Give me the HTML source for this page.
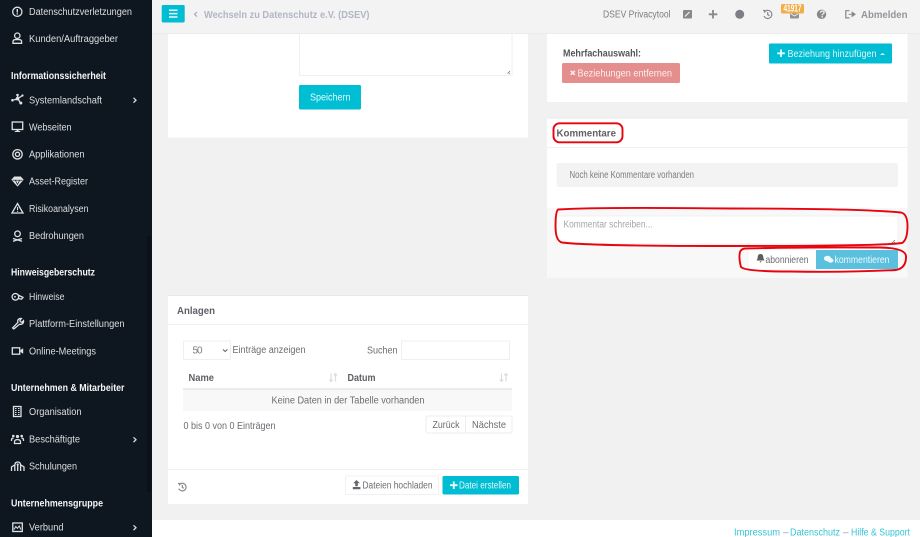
<!DOCTYPE html>
<html lang="de">
<head>
<meta charset="utf-8">
<title>DSEV Privacytool</title>
<style>
html,body{margin:0;padding:0;width:920px;height:537px;overflow:hidden;background:#f1f1f1}
svg{display:block;filter:blur(.35px)}
text{font-family:"Liberation Sans",sans-serif;font-size:10px}
.s{fill:#dcdfe1}
.h{fill:#f4f5f6;font-weight:bold}
.g{fill:#6a6d72}
.b{fill:#5d6066;font-weight:bold}
.ic{fill:none;stroke:#dfe1e3;stroke-width:1.3}
.icf{fill:#dfe1e3}
.t{fill:none;stroke:#85888c;stroke-width:1.2}
.tf{fill:#85888c}
.red{fill:none;stroke:#e8040f;stroke-width:1.9}
</style>
</head>
<body>
<svg width="920" height="537" viewBox="0 0 920 537" xmlns="http://www.w3.org/2000/svg">
<rect width="920" height="537" fill="#f1f1f1"/>
<!-- header -->
<rect x="152" width="768" height="33" fill="#f3f3f3"/>
<rect x="152" y="33" width="768" height="1" fill="#ececec"/>
<!-- footer -->
<rect x="152" y="520" width="768" height="17" fill="#fff"/>
<text x="734" y="535.5" fill="#35c5d8" textLength="46" lengthAdjust="spacingAndGlyphs">Impressum</text>
<text x="783" y="535.5" fill="#8fa0a8" font-size="9">–</text>
<text x="790" y="535.5" fill="#35c5d8" textLength="50" lengthAdjust="spacingAndGlyphs">Datenschutz</text>
<text x="843" y="535.5" fill="#8fa0a8">–</text>
<text x="851" y="535.5" fill="#35c5d8" textLength="59" lengthAdjust="spacingAndGlyphs">Hilfe &amp; Support</text>

<!-- sidebar -->
<rect width="152" height="537" fill="#0e171f"/>
<rect x="147" y="236" width="4" height="256" fill="#0a1117"/>
<text class="s" x="29" y="15" textLength="103" lengthAdjust="spacingAndGlyphs">Datenschutzverletzungen</text>
<text class="s" x="29" y="42" textLength="89" lengthAdjust="spacingAndGlyphs">Kunden/Auftraggeber</text>
<text class="s" x="29" y="103.5" textLength="73" lengthAdjust="spacingAndGlyphs">Systemlandschaft</text>
<text class="s" x="29" y="130.5" textLength="42.5" lengthAdjust="spacingAndGlyphs">Webseiten</text>
<text class="s" x="29" y="157.5" textLength="55.5" lengthAdjust="spacingAndGlyphs">Applikationen</text>
<text class="s" x="29" y="184.5" textLength="59" lengthAdjust="spacingAndGlyphs">Asset-Register</text>
<text class="s" x="29" y="212" textLength="59.5" lengthAdjust="spacingAndGlyphs">Risikoanalysen</text>
<text class="s" x="29" y="239" textLength="55" lengthAdjust="spacingAndGlyphs">Bedrohungen</text>
<text class="s" x="29" y="300" textLength="35.5" lengthAdjust="spacingAndGlyphs">Hinweise</text>
<text class="s" x="29" y="327" textLength="95.5" lengthAdjust="spacingAndGlyphs">Plattform-Einstellungen</text>
<text class="s" x="29" y="354.5" textLength="67" lengthAdjust="spacingAndGlyphs">Online-Meetings</text>
<text class="s" x="29" y="415" textLength="52.5" lengthAdjust="spacingAndGlyphs">Organisation</text>
<text class="s" x="29" y="442.5" textLength="51" lengthAdjust="spacingAndGlyphs">Beschäftigte</text>
<text class="s" x="29" y="469.5" textLength="48" lengthAdjust="spacingAndGlyphs">Schulungen</text>
<text class="s" x="29" y="530.5" textLength="34.5" lengthAdjust="spacingAndGlyphs">Verbund</text>
<text class="h" x="11" y="79" textLength="95" lengthAdjust="spacingAndGlyphs">Informationssicherheit</text>
<text class="h" x="11" y="275.5" textLength="84" lengthAdjust="spacingAndGlyphs">Hinweisgeberschutz</text>
<text class="h" x="11" y="391" textLength="113.5" lengthAdjust="spacingAndGlyphs">Unternehmen &amp; Mitarbeiter</text>
<text class="h" x="11" y="506.5" textLength="92" lengthAdjust="spacingAndGlyphs">Unternehmensgruppe</text>
<!-- sidebar chevrons -->
<g fill="none" stroke="#d8dadc" stroke-width="1.3">
<path d="M133.5 97.8l2.5 2.4-2.5 2.4"/>
<path d="M133.5 437.3l2.5 2.4-2.5 2.4"/>
<path d="M133.5 525.3l2.5 2.4-2.5 2.4"/>
</g>
<!-- sidebar icons -->
<circle class="ic" cx="17.3" cy="11.8" r="4.6"/>
<path class="icf" d="M16.6 9h1.4v3.5h-1.400zM16.6 13.200h1.400v1.300h-1.400z"/>
<circle class="ic" cx="17.3" cy="35.7" r="2.7"/>
<path class="ic" d="M13 43.300v-1.700q0-2 2.500-2h3.600q2.500 0 2.500 2v1.700z"/>
<!-- Systemlandschaft -->
<path class="ic" d="M14 100l4-1.500-.5-3M18 98.500l2 4M18 98.500l4.500-3" stroke-width="1"/>
<circle class="icf" cx="12.500" cy="100.200" r="1.300"/><circle class="icf" cx="17.500" cy="98.700" r="1.800"/><circle class="icf" cx="17.500" cy="95" r="1.300"/><circle class="icf" cx="22.500" cy="95.500" r="1.100"/><circle class="icf" cx="20.800" cy="103" r="1.500"/>
<!-- Webseiten -->
<rect class="ic" x="12.200" y="122" width="10.500" height="7.500"/>
<path class="icf" d="M16.500 129.500h2v1.500h1.700v1h-5.400v-1h1.700z"/>
<!-- Applikationen -->
<circle class="ic" cx="17.500" cy="154.300" r="4.700"/><circle class="ic" cx="17.500" cy="154.300" r="2.100"/>
<!-- Asset -->
<path class="icf" d="M14.200 176.500h6.600l2.900 3.300-6.200 6.800-6.200-6.800z"/>
<path d="M12.500 180.200h10M15.500 180.500l2 4 2-4" fill="none" stroke="#0e171f" stroke-width=".7"/>
<!-- Risiko -->
<path d="M17.500 203.500l5.500 9.500H12z" fill="none" stroke="#dfe1e3" stroke-width="1.300"/>
<path class="icf" d="M17 207h1.100v3H17zM17 210.800h1.100v1H17z"/>
<!-- Bedrohungen -->
<circle class="ic" cx="17.500" cy="233.800" r="2.800"/>
<path class="ic" d="M13 238.500l9 2.800M22 238.500l-9 2.800"/>
<!-- Hinweise -->
<circle class="ic" cx="15.400" cy="296.800" r="3.300"/>
<path class="ic" d="M18 295l5 2.400-1.400 1.800-3.800-.8"/>
<circle class="icf" cx="15" cy="296.800" r=".9"/>
<!-- Plattform -->
<path class="ic" d="M13.500 328.800l-.9-.9 5.300-5.500q-.7-2.500 1-3.500 1.200-.7 2.500-.4l-1.500 1.700.5 1.500 1.500.5 1.600-1.500q.3 2-1 3-1.300 1-3 .6l-5.500 4.500z" stroke-width="1"/>
<!-- Online-Meetings -->
<rect class="ic" x="12.300" y="347.800" width="7.400" height="6.400"/>
<path class="icf" d="M20.500 350l2.700-1.800v5.600l-2.700-1.800z"/>
<!-- Organisation -->
<rect class="ic" x="13.500" y="406.500" width="7.500" height="10"/>
<path d="M15 408.500h1.500M18 408.500h1.500M15 410.500h1.500M18 410.500h1.500M15 412.500h1.500M18 412.500h1.500M15 414.500h1.500M18 414.500h1.500" stroke="#dfe1e3" stroke-width="1.100"/>
<!-- Beschaeftigte -->
<circle class="icf" cx="17.500" cy="436.500" r="1.600"/><circle class="icf" cx="13.300" cy="436" r="1.300"/><circle class="icf" cx="21.700" cy="436" r="1.300"/>
<path class="ic" d="M14.500 443.500v-1.600q0-2.300 3-2.300t3 2.300v1.600zM11.500 441v-1.300q0-1.500 2-1.500M23.500 441v-1.300q0-1.500-2-1.500" stroke-width="1"/>
<!-- Schulungen -->
<path class="ic" d="M14.800 471v-5.500q0-3.500 2.900-3.500t2.900 3.500v5.500M11.500 471v-4l3-2M24 471v-4l-3-2M17.700 465.500V471" stroke-width="1.100"/>
<circle class="icf" cx="17.700" cy="464.500" r="1.100"/>
<!-- Verbund -->
<rect class="ic" x="12.800" y="523" width="9.500" height="8.500" stroke-width="1"/>
<path d="M14 529.500l1.800-3 1.700 1.800 1.700-2.300 1.700 3.500" fill="none" stroke="#dfe1e3" stroke-width="1"/>

<!-- header content -->
<rect x="161.700" y="5" width="23" height="17.500" rx="1.500" fill="#00bdd3"/>
<path d="M169 10.200h8.500M169 13.600h8.500M169 17h8.500" stroke="#e9fbfd" stroke-width="1.500"/>
<path d="M197 12l-2.400 2.300 2.400 2.300" fill="none" stroke="#a4a9b5" stroke-width="1.200"/>
<text x="204" y="18" fill="#b1b6c4" font-weight="bold" font-size="10.500" textLength="165.500" lengthAdjust="spacingAndGlyphs">Wechseln zu Datenschutz e.V. (DSEV)</text>
<text x="603" y="17.500" style="fill:#7a7d83" textLength="67.500" lengthAdjust="spacingAndGlyphs">DSEV Privacytool</text>
<rect x="683" y="10" width="9" height="8.500" rx="1" fill="#85888c"/>
<path d="M685 16.500l4.500-4.500" stroke="#f3f3f3" stroke-width="1.200"/>
<path d="M713 10v8.500M708.800 14.300h8.500" stroke="#85888c" stroke-width="1.800"/>
<circle cx="739.700" cy="14.300" r="4.500" fill="#7c7f83"/>
<path class="t" d="M763 10.500h1.500l.3 1.400q1.400-1.900 3-1.600a4.100 4.100 0 1 1-3.800 5.800"/>
<path class="t" d="M767.700 12v2.700l1.700 1"/>
<rect x="790" y="11" width="9" height="7.500" rx="1" fill="#8f9296"/>
<path d="M790.500 13.500l4 2.500 4-2.500" fill="none" stroke="#f3f3f3" stroke-width=".8"/>
<rect x="781" y="4" width="23" height="9.500" rx="1.500" fill="#f2ae4a"/>
<text x="783.500" y="11.600" fill="#fff" font-weight="bold" font-size="7.500" textLength="18" lengthAdjust="spacingAndGlyphs">41917</text>
<circle cx="821.500" cy="14.300" r="4.700" fill="#85888c"/>
<text x="819.300" y="17.300" fill="#f3f3f3" font-weight="bold" font-size="8">?</text>
<path class="t" d="M849.500 10.700h-3.700v7.200h3.700"/>
<path d="M848.500 14.300h3.500v-2.300l3.300 2.300-3.300 2.300v-2.300" fill="#85888c" stroke="#85888c" stroke-width=".8"/>
<text x="861" y="18" fill="#92959a" font-weight="bold" font-size="10.500" textLength="46.500" lengthAdjust="spacingAndGlyphs">Abmelden</text>

<!-- left top card -->
<rect x="168" y="34" width="360" height="103.500" fill="#fff"/>
<path d="M299.500 34v41.500h212.600V34" fill="#fff" stroke="#efefef"/>
<path d="M510 71l-2.500 2.500M510 73l-1 1" stroke="#777" stroke-width=".8"/>
<rect x="299" y="85" width="62" height="24.500" rx="1.500" fill="#00bfd5"/>
<text x="310" y="100.500" fill="#e8fbfd" textLength="40.500" lengthAdjust="spacingAndGlyphs">Speichern</text>

<!-- right top card -->
<rect x="547" y="34" width="360.500" height="68" fill="#fff"/>
<text x="563" y="56.500" class="b" style="fill:#555" textLength="78" lengthAdjust="spacingAndGlyphs">Mehrfachauswahl:</text>
<rect x="769" y="43.500" width="123" height="20" rx="1" fill="#00bdd3"/>
<path d="M781 49.500v7.500M777.300 53.300h7.500" stroke="#e9fbfd" stroke-width="1.800"/>
<text x="787.500" y="56.800" fill="#dff8fb" textLength="89" lengthAdjust="spacingAndGlyphs">Beziehung hinzufügen</text>
<path d="M880 55l2.500-2 2.500 2z" fill="#e9fbfd"/>
<rect x="562" y="63" width="118" height="20" rx="1.500" fill="#e58e8e"/>
<path d="M570.800 70.800l4 4M574.800 70.800l-4 4" stroke="#fdeeee" stroke-width="1.600"/>
<text x="577.500" y="76.500" fill="#fdeeee" textLength="94.500" lengthAdjust="spacingAndGlyphs">Beziehungen entfernen</text>

<!-- Kommentare card -->
<rect x="547" y="117.500" width="360.500" height="160.500" fill="#fff"/>
<rect x="547" y="117.500" width="360.500" height="1" fill="#e9e9e9"/>
<rect x="547" y="147" width="360.500" height="1" fill="#f1f1f1"/>
<text x="556.500" y="136.500" class="b" textLength="59.500" lengthAdjust="spacingAndGlyphs" font-size="10.500">Kommentare</text>
<rect x="556.500" y="163" width="341.500" height="24" rx="2" fill="#f3f3f3"/>
<text x="569.500" y="177.800" fill="#7a7d82" font-size="9" textLength="124.500" lengthAdjust="spacingAndGlyphs">Noch keine Kommentare vorhanden</text>
<rect x="547" y="208" width="360.500" height="70" fill="#f8f8f8"/>
<rect x="556.500" y="216" width="341.500" height="28" fill="#fff" stroke="#f1f1f1"/>
<text x="563.500" y="227.500" fill="#a3a5a9" font-size="9.500" textLength="89" lengthAdjust="spacingAndGlyphs">Kommentar schreiben...</text>
<path d="M895 240l-3.500 3.500M895 242l-1.500 1.500" stroke="#777" stroke-width=".8"/>
<rect x="749" y="250" width="67" height="19" fill="#fff"/>
<rect x="816" y="250" width="82" height="19" fill="#5bc0de"/>
<path d="M760.500 254q-2.700 0-2.800 3.200-.1 1.900-1.200 3.300h8q-1.100-1.400-1.200-3.300-.1-3.200-2.800-3.200zM759.500 261.300h2l-1 1.400z" fill="#5a5d62"/>
<text x="765.500" y="263" fill="#6a6d72" textLength="43" lengthAdjust="spacingAndGlyphs">abonnieren</text>
<ellipse cx="827.500" cy="258.500" rx="3.600" ry="2.700" fill="#eef9fc"/><ellipse cx="830.500" cy="260.500" rx="3" ry="2.200" fill="#eef9fc"/>
<text x="834.500" y="263" fill="#eef9fc" textLength="55" lengthAdjust="spacingAndGlyphs">kommentieren</text>
<!-- red annotations -->
<rect class="red" x="553.500" y="123.300" width="69" height="19" rx="6"/>
<path class="red" d="M558 209.500Q600 207 730 208.500 860 208.500 901 212.500 907.500 214 907.500 226 907.500 240 902 243 880 246 730 246 590 246 562 242.500 555.500 241 555.500 226 555.500 212 558 209.500z"/>
<path class="red" d="M745 248.500Q800 247 880 247.500 905 248 906 256 906.500 268 896 270 850 272.500 790 271.500 745 271.500 741 267 738.500 258 740 252 741 249 745 248.500z"/>

<!-- Anlagen card -->
<rect x="168" y="295" width="360" height="209" fill="#fff"/>
<rect x="168" y="295" width="360" height="1" fill="#e9e9e9"/>
<rect x="168" y="324" width="360" height="1" fill="#f1f1f1"/>
<text x="177" y="314" class="b" font-size="10.500" textLength="38" lengthAdjust="spacingAndGlyphs">Anlagen</text>
<rect x="183.500" y="341" width="47" height="18.500" rx="1" fill="#fff" stroke="#efefef"/>
<text x="192.500" y="353.500" fill="#7a7d82" textLength="10">50</text>
<path d="M223 349.500l2.200 2 2.200-2" fill="none" stroke="#55585c" stroke-width="1"/>
<text x="232.500" y="353" class="g" textLength="73" lengthAdjust="spacingAndGlyphs">Einträge anzeigen</text>
<text x="367" y="353.500" class="g" textLength="30.500" lengthAdjust="spacingAndGlyphs">Suchen</text>
<rect x="401.500" y="341" width="108" height="18.500" fill="#fff" stroke="#efefef"/>
<text x="188.500" y="381" class="b" textLength="25.500" lengthAdjust="spacingAndGlyphs">Name</text>
<text x="347.500" y="381" class="b" textLength="28" lengthAdjust="spacingAndGlyphs">Datum</text>
<path d="M331 373.500v8M329.300 379.500l1.700 2 1.700-2M335.500 381.500v-8M333.800 375.500l1.700-2 1.700 2M501.500 373.500v8M499.800 379.500l1.700 2 1.700-2M506 381.500v-8M504.300 375.500l1.700-2 1.700 2" fill="none" stroke="#dcdcdc" stroke-width="1.200"/>
<rect x="183" y="388" width="329" height="2" fill="#ebebeb"/>
<rect x="183" y="390" width="329" height="21" fill="#f8f8f8"/>
<text x="271.500" y="403.500" class="g" textLength="153" lengthAdjust="spacingAndGlyphs">Keine Daten in der Tabelle vorhanden</text>
<text x="183.500" y="429" class="g" textLength="92" lengthAdjust="spacingAndGlyphs">0 bis 0 von 0 Einträgen</text>
<rect x="426" y="416" width="86" height="17" rx="2" fill="#fff" stroke="#ededed"/>
<path d="M465.500 416v17" stroke="#ededed"/>
<text x="432.500" y="428" class="g" textLength="27" lengthAdjust="spacingAndGlyphs">Zurück</text>
<text x="472" y="428" class="g" textLength="34" lengthAdjust="spacingAndGlyphs">Nächste</text>
<rect x="168" y="469" width="360" height="1" fill="#f1f1f1"/>
<path class="t" d="M178 483.500h1.300l.3 1.200q1.200-1.600 2.800-1.400a3.800 3.800 0 1 1-3.600 5.300" stroke-width="1.100"/>
<path class="t" d="M182.300 485v2.400l1.500.9" stroke-width="1"/>
<rect x="345.500" y="476" width="93" height="18.500" rx="1.500" fill="#fff" stroke="#f1f1f1"/>
<path d="M356.500 480l3.300 3.300h-2v3h-2.600v-3h-2zM352.800 487h7.600v2.200h-7.600z" fill="#63666b"/>
<text x="362.500" y="488.500" class="g" textLength="70" lengthAdjust="spacingAndGlyphs">Dateien hochladen</text>
<rect x="442.500" y="476" width="76.500" height="18.500" rx="1.500" fill="#00bdd3"/>
<path d="M453.800 481.500v7.500M450 485.200h7.500" stroke="#eafbfd" stroke-width="1.800"/>
<text x="459" y="488.500" fill="#e3f9fb" textLength="52" lengthAdjust="spacingAndGlyphs">Datei erstellen</text>
</svg>
</body>
</html>
